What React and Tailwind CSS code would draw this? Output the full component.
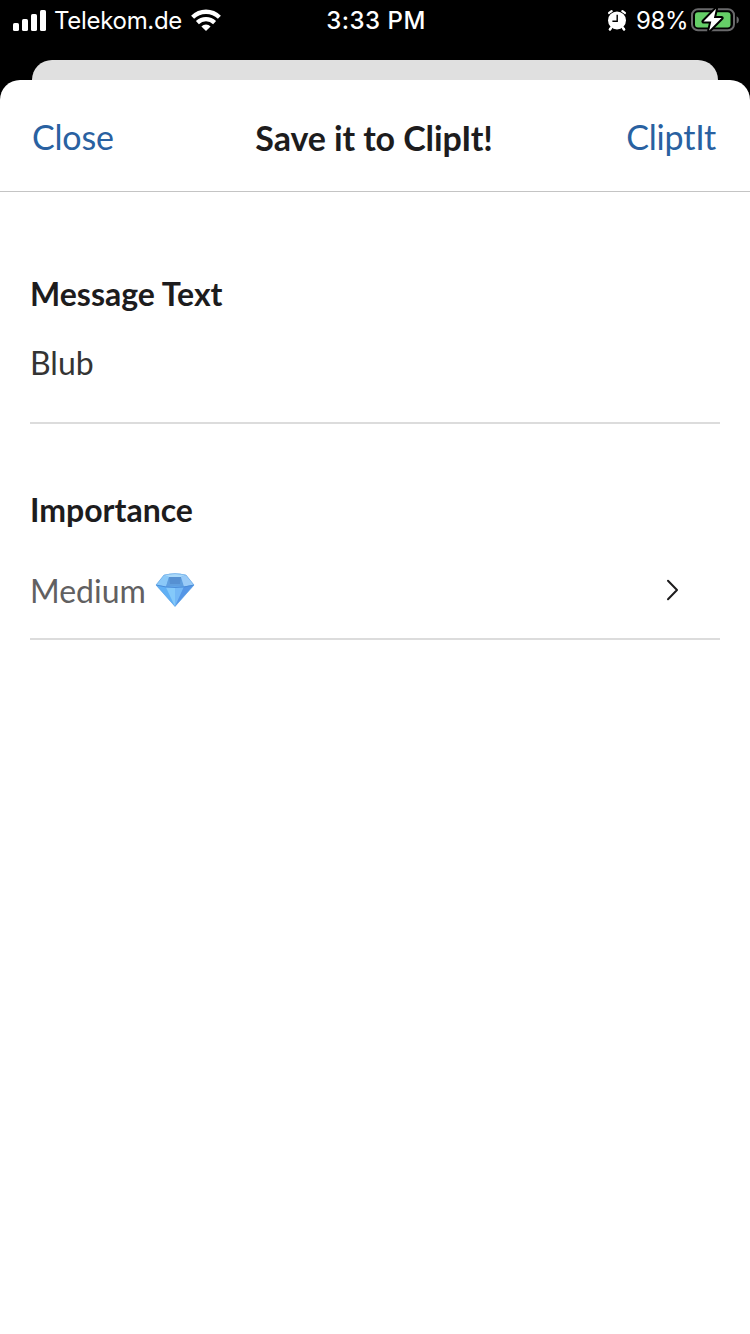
import React from "react";

function Signal() {
  return (
    <svg width="33" height="21" viewBox="0 0 33 21" fill="#fff" className="block">
      <rect x="0" y="13" width="6" height="8" rx="1.6" />
      <rect x="9" y="9" width="6" height="12" rx="1.6" />
      <rect x="18" y="4" width="6" height="17" rx="1.6" />
      <rect x="27" y="0" width="6" height="21" rx="1.6" />
    </svg>
  );
}

function Wifi() {
  return (
    <svg width="30" height="22" viewBox="0 0 30 22" className="block">
      <g fill="none" stroke="#fff" strokeWidth="4.3">
        <path d="M1.6 8.2 A19.2 19.2 0 0 1 28.4 8.2" />
        <path d="M6.4 13.6 A12.4 12.4 0 0 1 23.6 13.6" />
      </g>
      <path d="M15 22 L10.4 17.6 A6.2 6.2 0 0 1 19.6 17.6 Z" fill="#fff" />
    </svg>
  );
}

function Alarm() {
  return (
    <svg width="18" height="21" viewBox="0 0 18 21" className="block overflow-visible">
      <g stroke="#fff" strokeWidth="2.4" strokeLinecap="round">
        <path d="M1.2 3 L3.6 1.3" />
        <path d="M16.8 3 L14.4 1.3" />
        <path d="M3.4 17.5 L1.9 19.4" />
        <path d="M14.6 17.5 L16.1 19.4" />
      </g>
      <circle cx="9" cy="10.4" r="9.6" fill="#000" />
      <circle cx="9" cy="10.4" r="9" fill="#fff" />
      <g stroke="#fff" strokeWidth="2.2" strokeLinecap="round">
        <path d="M3.6 17.2 L1.9 19.4" />
        <path d="M14.4 17.2 L16.1 19.4" />
      </g>
      <path d="M9.2 4.8 V11.2 H4.4" fill="none" stroke="#000" strokeWidth="1.4" />
    </svg>
  );
}

function Battery() {
  return (
    <svg width="48" height="24" viewBox="0 0 48 24" className="block">
      <rect x="1" y="1.3" width="42" height="21" rx="6" fill="none" stroke="#69696b" strokeWidth="2" />
      <path d="M45.6 8.2 C48.6 9.6 48.6 14.2 45.6 15.6 Z" fill="#69696b" />
      <rect x="4" y="4.2" width="35.5" height="15.4" rx="3" fill="#65ce67" />
      <path d="M25 0.8 L12.5 13.5 H20.3 L18.2 22.6 L30.6 10 H22.9 Z" fill="#fff" stroke="#000" strokeWidth="4" strokeLinejoin="round" />
      <path d="M25 0.8 L12.5 13.5 H20.3 L18.2 22.6 L30.6 10 H22.9 Z" fill="#fff" />
    </svg>
  );
}

function Gem() {
  return (
    <svg width="40" height="34" viewBox="0 0 40 34" className="block">
      <path d="M9 2 Q20 -0.8 31 2 L39 12 L20 33.5 L1 12 Z" fill="#65adf2" />
      <path d="M9 2 L14 4 L11 13.5 L1 12 Z" fill="#8bc9f8" />
      <path d="M9 2 Q20 -0.8 31 2 L26 4 H14 Z" fill="#a9d9fa" />
      <path d="M14 4 H26 L29 13.5 H11 Z" fill="#609fdf" />
      <path d="M14 4 H26 L25 11 H15 Z" fill="#5690d2" />
      <path d="M31 2 L26 4 L29 13.5 L39 12 Z" fill="#9acbf7" />
      <path d="M1 12 L11 13.5 L20 33.5 Z" fill="#60b0f5" />
      <path d="M11 14.5 H20 V33.5 Z" fill="#84c9fa" />
      <path d="M20 14.5 H29 L20 33.5 Z" fill="#74b8f6" />
      <path d="M39 12 L29 13.5 L20 33.5 Z" fill="#5596e6" />
      <path d="M1 12 Q20 17 39 12" fill="none" stroke="#4a8ad6" strokeWidth="0.9" />
      <path d="M9 2 Q20 -0.8 31 2 L39 12 L20 33.5 L1 12 Z" fill="none" stroke="#6aa8e4" strokeWidth="0.6" strokeLinejoin="round" />
    </svg>
  );
}

function StatusBar() {
  return (
    <header className="grid h-10 grid-cols-[1fr_auto_1fr] items-center font-['Inter',sans-serif] text-2xl leading-10 text-white">
      <div className="flex items-center pl-[13px]">
        <Signal />
        <span className="ml-2 w-[137px] pt-0.5 leading-[38px] tracking-[-0.3px] whitespace-nowrap">Telekom.de</span>
        <Wifi />
      </div>
      <span className="pt-0.5 pl-0.5 leading-[38px] font-medium tracking-[0.5px]">3:33 PM</span>
      <div className="flex items-center justify-end pr-[11px]">
        <Alarm />
        <span className="ml-[10px] w-[55px] pt-0.5 leading-[38px] tracking-[-0.4px] whitespace-nowrap">98%</span>
        <Battery />
      </div>
    </header>
  );
}

function Field({ label, children }) {
  return (
    <section className="flex h-[216px] flex-col border-b-2 border-[#dcdcdc] text-[32px]">
      <h2 className="pt-[66px] pb-px leading-[40px] font-bold text-[#1d1c1d]">{label}</h2>
      {children}
    </section>
  );
}

export default function App() {
  return (
    <div className="flex h-[1334px] w-[750px] flex-col overflow-hidden bg-black font-['Lato',sans-serif]">
      <StatusBar />
      <div className="mx-8 mt-5 h-5 shrink-0 rounded-t-[20px] bg-[#e0e0e0]" />
      <main className="flex-1 rounded-t-[20px] bg-white">
        <nav className="grid h-28 grid-cols-[1fr_auto_1fr] items-center border-b border-[#c4c4c4] pt-0.5 pr-[34px] pl-8 text-[34px] leading-[40px]">
          <button className="text-left tracking-[-0.2px] text-[#2961a1]">Close</button>
          <h1 className="pt-0.5 font-bold tracking-[-0.1px] text-[#1d1c1d]">Save it to ClipIt!</h1>
          <button className="text-right tracking-[-0.2px] text-[#2961a1]">CliptIt</button>
        </nav>
        <div className="px-[30px] pt-4">
          <Field label="Message Text">
            <p className="pt-[28px] leading-[40px] text-[#343434]">Blub</p>
          </Field>
          <Field label="Importance">
            <div className="flex items-center pt-[40px] pr-10 leading-[40px] text-[#616061]">
              <span className="mr-[9px]">Medium</span>
              <span className="pb-0.5"><Gem /></span>
              <svg width="14" height="24" viewBox="0 0 14 24" className="ml-auto block">
                <path d="M2 1.8 L11 11 L2 20.2" fill="none" stroke="#1d1c1d" strokeWidth="2" strokeLinecap="round" strokeLinejoin="round" />
              </svg>
            </div>
          </Field>
        </div>
      </main>
    </div>
  );
}
